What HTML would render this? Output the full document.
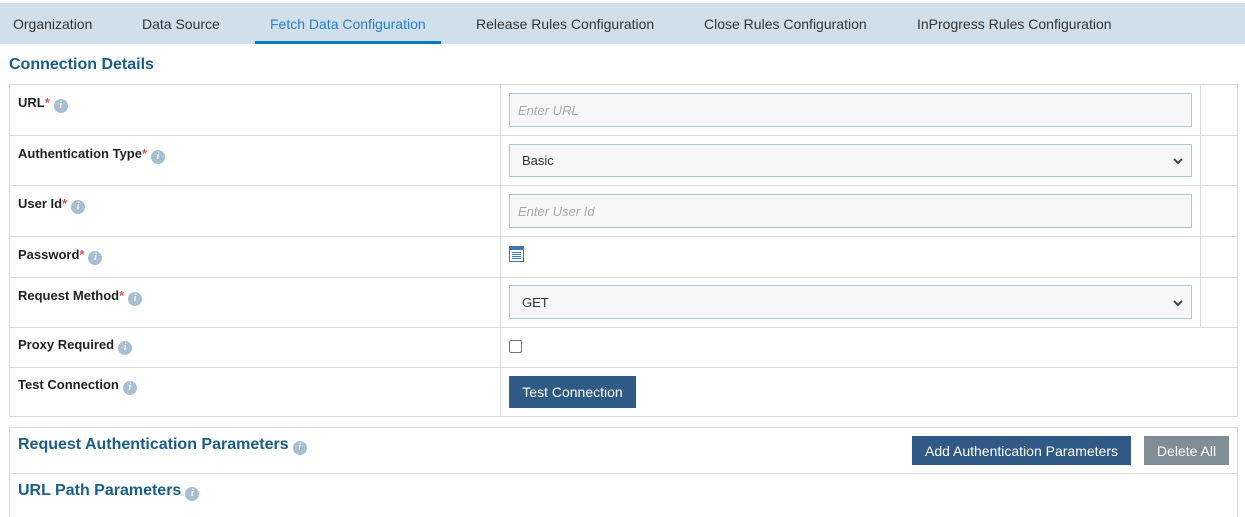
<!DOCTYPE html><html style="height:517px;overflow:hidden"><head><style>
body{margin:0;width:1245px;height:517px;overflow:hidden;background:#fff;font-family:"Liberation Sans",sans-serif;position:relative}
.a{position:absolute}
.tabs{left:0;top:3px;width:1245px;height:41px;background:#d1dfeb}
.tab{top:16px;font-size:14px;color:#333}
.b{border:1px solid #dcdcdc;box-sizing:border-box}
.lbl{font-size:13px;font-weight:bold;color:#222;left:18px}
.req{color:#d9534f}
.i{display:inline-block;width:14px;height:14px;border-radius:50%;background:#a8bfd3;color:#fff;font:italic bold 10px "Liberation Serif",serif;text-align:center;line-height:14px;vertical-align:-1px;margin-left:4px}
.inp{left:509px;width:683px;background:#f7f7f7;border:1px solid #a9c9d9;box-sizing:border-box;font-size:13px;color:#333;padding-left:12px;display:flex;align-items:center}
.ph{color:#aaa;font-style:italic}
.hl{height:1px;background:#dcdcdc;left:9px;width:1229px}
.btn{background:#305a86;color:#fff;font-size:14px;display:flex;align-items:center;justify-content:center}
</style></head><body>
<div class="a tabs"></div>
<div class="a tab" style="left:13px">Organization</div>
<div class="a tab" style="left:142px">Data Source</div>
<div class="a tab" style="left:270px;color:#2b7ec1">Fetch Data Configuration</div>
<div class="a tab" style="left:476px">Release Rules Configuration</div>
<div class="a tab" style="left:704px">Close Rules Configuration</div>
<div class="a tab" style="left:917px">InProgress Rules Configuration</div>
<div class="a" style="left:255px;top:41px;width:186px;height:3px;background:#0a7bc0"></div>
<div class="a" style="left:9px;top:56px;font-size:16px;font-weight:bold;color:#1a5e8a">Connection Details</div>
<div class="a b" style="left:9px;top:84px;width:1229px;height:333px"></div>
<div class="a" style="left:500px;top:84px;width:1px;height:333px;background:#dcdcdc"></div>
<div class="a" style="left:1200px;top:84px;width:1px;height:243px;background:#dcdcdc"></div>
<div class="a hl" style="top:135px"></div><div class="a hl" style="top:185px"></div><div class="a hl" style="top:236px"></div><div class="a hl" style="top:277px"></div><div class="a hl" style="top:327px"></div><div class="a hl" style="top:367px"></div>
<div class="a lbl" style="top:95px">URL<span class="req">*</span><span class="i">i</span></div>
<div class="a lbl" style="top:146px">Authentication Type<span class="req">*</span><span class="i">i</span></div>
<div class="a lbl" style="top:196px">User Id<span class="req">*</span><span class="i">i</span></div>
<div class="a lbl" style="top:247px">Password<span class="req">*</span><span class="i">i</span></div>
<div class="a lbl" style="top:288px">Request Method<span class="req">*</span><span class="i">i</span></div>
<div class="a lbl" style="top:337px">Proxy Required<span class="i">i</span></div>
<div class="a lbl" style="top:377px">Test Connection<span class="i">i</span></div>
<div class="a inp" style="top:93px;height:34px;padding-left:8px"><span class="ph">Enter URL</span></div>
<div class="a inp" style="top:144px;height:33px">Basic<svg class="a" style="right:8px;top:12px" width="10" height="8"><path d="M1 2l4 4 4-4" stroke="#444" stroke-width="2" fill="none"/></svg></div>
<div class="a inp" style="top:194px;height:34px;padding-left:8px"><span class="ph">Enter User Id</span></div>
<svg class="a" style="left:509px;top:246px" width="15" height="16"><rect x=".5" y=".5" width="14" height="15" fill="#fff" stroke="#3d78b0"/><rect x="1" y="1" width="13" height="3" fill="#3d78b0"/><path d="M3 6.5h9M3 8.5h9M3 10.5h9M3 12.5h9" stroke="#3d78b0"/></svg>
<div class="a inp" style="top:285px;height:34px">GET<svg class="a" style="right:8px;top:13px" width="10" height="8"><path d="M1 2l4 4 4-4" stroke="#444" stroke-width="2" fill="none"/></svg></div>
<div class="a" style="left:509px;top:340px;width:11px;height:11px;border:1px solid #777;border-radius:2px"></div>
<div class="a btn" style="left:509px;top:376px;width:127px;height:32px">Test Connection</div>
<div class="a" style="left:9px;top:427px;width:1229px;height:90px;border:1px solid #dcdcdc;border-bottom:0;box-sizing:border-box"></div>
<div class="a hl" style="top:473px"></div>
<div class="a" style="left:18px;top:436px;font-size:16px;font-weight:bold;color:#1a5e8a">Request Authentication Parameters<span class="i">i</span></div>
<div class="a" style="left:18px;top:482px;font-size:16px;font-weight:bold;color:#1a5e8a">URL Path Parameters<span class="i">i</span></div>
<div class="a btn" style="left:912px;top:436px;width:219px;height:29px">Add Authentication Parameters</div>
<div class="a btn" style="left:1144px;top:436px;width:85px;height:29px;background:#808d96">Delete All</div>
</body></html>
